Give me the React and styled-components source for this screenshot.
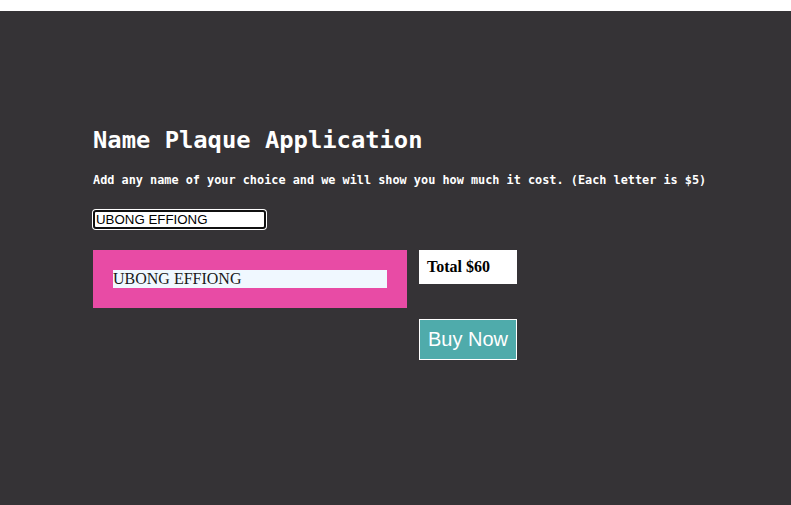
import React, { useState } from "react";
import styled, { createGlobalStyle } from "styled-components";

const GlobalStyle = createGlobalStyle`
  body {
    margin: 0;
    background: #ffffff;
  }
`;

const Page = styled.div`
  margin-top: 11px;
  min-height: 494px;
  box-sizing: border-box;
  background: #353336;
  padding: 115px 93px 0;
  display: flex;
  flex-direction: column;
  align-items: flex-start;
`;

const Title = styled.h1`
  margin: 0;
  font-family: "DejaVu Sans Mono", monospace;
  font-size: 23.8px;
  font-weight: bold;
  line-height: 28px;
  color: #ffffff;
`;

const Subtitle = styled.p`
  margin: 19px 0 0;
  font-family: "DejaVu Sans Mono", monospace;
  font-size: 11.85px;
  font-weight: bold;
  line-height: 14px;
  color: #ffffff;
  white-space: nowrap;
`;

const NameInput = styled.input`
  margin-top: 23px;
  width: 173px;
  height: 19px;
  box-sizing: border-box;
  padding: 0 1px;
  border: 2px solid #101010;
  border-radius: 3px;
  box-shadow: 0 0 0 1px #ffffff;
  outline: none;
  background: #ffffff;
  font-family: "Liberation Sans", Arial, sans-serif;
  font-size: 13.3px;
  color: #000000;
`;

const Row = styled.div`
  margin-top: 21px;
  display: flex;
  gap: 12px;
  align-items: flex-start;
`;

const Plaque = styled.div`
  width: 314px;
  height: 58px;
  box-sizing: border-box;
  padding: 20px;
  background: #e84ba5;
`;

const PlaqueText = styled.div`
  height: 18px;
  background: #f0f8ff;
  font-family: "Liberation Serif", "Times New Roman", serif;
  font-size: 16px;
  line-height: 18px;
  color: #1a1a1a;
  white-space: nowrap;
  overflow: hidden;
`;

const Side = styled.div`
  display: flex;
  flex-direction: column;
  gap: 35px;
`;

const Total = styled.div`
  width: 98px;
  height: 34px;
  box-sizing: border-box;
  padding: 0 8px;
  display: flex;
  align-items: center;
  background: #ffffff;
  font-family: "Liberation Serif", "Times New Roman", serif;
  font-size: 16px;
  font-weight: bold;
  color: #000000;
`;

const BuyButton = styled.button`
  width: 98px;
  height: 41px;
  box-sizing: border-box;
  padding: 0 0 0 8px;
  text-align: left;
  border: 1px solid #ffffff;
  background: #4fabab;
  font-family: "Liberation Sans", Arial, sans-serif;
  font-size: 20px;
  color: #ffffff;
  cursor: pointer;
`;

const PRICE_PER_LETTER = 5;

export default function App() {
  const [name, setName] = useState("UBONG EFFIONG");
  const letters = name.replace(/\s/g, "").length;

  return (
    <>
      <GlobalStyle />
      <Page>
        <Title>Name Plaque Application</Title>
        <Subtitle>
          Add any name of your choice and we will show you how much it cost.
          (Each letter is $5)
        </Subtitle>
        <NameInput value={name} onChange={(e) => setName(e.target.value)} />
        <Row>
          <Plaque>
            <PlaqueText>{name}</PlaqueText>
          </Plaque>
          <Side>
            <Total>Total ${letters * PRICE_PER_LETTER}</Total>
            <BuyButton>Buy Now</BuyButton>
          </Side>
        </Row>
      </Page>
    </>
  );
}
